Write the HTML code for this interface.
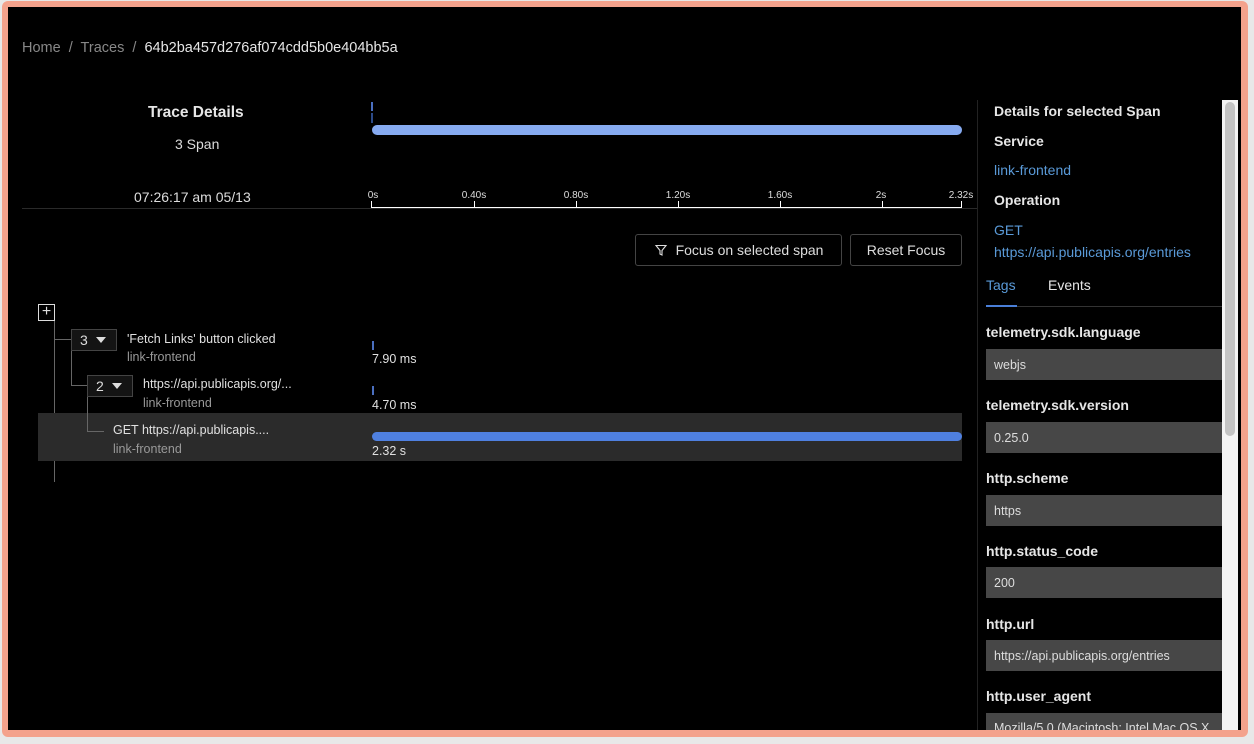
<!DOCTYPE html>
<html><head><meta charset="utf-8"><style>
*{margin:0;padding:0;box-sizing:border-box}
body{width:1254px;height:744px;background:#e8e8e8;font-family:"Liberation Sans",sans-serif;position:relative;overflow:hidden;color:#ddd}
.frame{position:absolute;left:2px;top:1px;width:1246px;height:736px;background:#f4a28c;border-radius:6px}
.inner{position:absolute;left:8px;top:7px;width:1233px;height:723px;background:#000;overflow:hidden}
.a{position:absolute;white-space:nowrap}
.bc{font-size:14.5px;color:#888}
.w{color:#e6e6e6}
.tick{position:absolute;top:201px;width:1px;height:6px;background:#fff}
.tl{position:absolute;top:190px;font-size:10px;color:#ddd;transform:translateX(-50%)}
.btn{position:absolute;border:1px solid #444;border-radius:3px;font-size:14px;color:#ddd;display:flex;align-items:center;justify-content:center;height:32px;top:234px}
.num{position:absolute;border:1px solid #444;background:#141414;font-size:14px;color:#ddd;width:46px;height:22px;display:flex;align-items:center;padding-left:8px}
.tri{display:inline-block;width:0;height:0;border-left:5px solid transparent;border-right:5px solid transparent;border-top:6px solid #ddd;margin-left:8px}
.ln{position:absolute;background:#666}
.nm{font-size:12.5px;color:#e0e0e0}
.sv{font-size:12.5px;color:#999}
.k{position:absolute;left:986px;font-size:14px;font-weight:bold;color:#e6e6e6}
.v{position:absolute;left:986px;width:236px;height:31px;background:#474747;font-size:12.5px;color:#ddd;padding-left:8px;display:flex;align-items:center}
</style></head><body>
<div class="frame"></div>
<div class="inner"></div>
<div class="a bc" style="left:22px;top:40px">Home &nbsp;/&nbsp; Traces &nbsp;/&nbsp; <span class="w">64b2ba457d276af074cdd5b0e404bb5a</span></div>
<div class="a" style="left:148px;top:104px;font-size:15.5px;font-weight:bold;color:#e6e6e6">Trace Details</div>
<div class="a" style="left:175px;top:136px;font-size:14px;color:#ddd">3 Span</div>
<div class="a" style="left:134px;top:189px;font-size:14px;color:#ddd">07:26:17 am 05/13</div>
<div class="a" style="left:22px;top:208px;width:955px;height:1px;background:#2a2a2a"></div>
<div class="a" style="left:371px;top:102px;width:2px;height:9px;background:#4a6fc0"></div>
<div class="a" style="left:371px;top:113px;width:2px;height:10px;background:#2c4a88"></div>
<div class="a" style="left:372px;top:125px;width:590px;height:10px;border-radius:5px;background:#86aaf0"></div>
<div class="a" style="left:371px;top:207px;width:591px;height:1px;background:#fff"></div>
<div class="tick" style="left:371px"></div><div class="tick" style="left:474px"></div><div class="tick" style="left:576px"></div><div class="tick" style="left:678px"></div><div class="tick" style="left:780px"></div><div class="tick" style="left:882px"></div><div class="tick" style="left:961px"></div>
<div class="tl" style="left:373px">0s</div><div class="tl" style="left:474px">0.40s</div><div class="tl" style="left:576px">0.80s</div><div class="tl" style="left:678px">1.20s</div><div class="tl" style="left:780px">1.60s</div><div class="tl" style="left:881px">2s</div><div class="tl" style="left:961px">2.32s</div>
<div class="btn" style="left:635px;width:207px"><svg width="14" height="14" viewBox="0 0 14 14" style="margin-right:8px"><path d="M2 2.5h10L8 7.5v4.5l-2-1V7.5z" fill="none" stroke="#ddd" stroke-width="1.1"/></svg>Focus on selected span</div>
<div class="btn" style="left:850px;width:112px">Reset Focus</div>
<div class="a" style="left:38px;top:304px;width:17px;height:17px;border:1.5px solid #ddd;color:#ddd;font-size:16px;line-height:13px;text-align:center">+</div>
<div class="ln" style="left:54px;top:321px;width:1px;height:161px"></div>
<div class="ln" style="left:54px;top:339px;width:18px;height:1px"></div>
<div class="num" style="left:71px;top:329px">3<span class="tri"></span></div>
<div class="a nm" style="left:127px;top:332px">'Fetch Links' button clicked</div>
<div class="a sv" style="left:127px;top:350px">link-frontend</div>
<div class="ln" style="left:71px;top:351px;width:1px;height:34px"></div>
<div class="ln" style="left:71px;top:385px;width:17px;height:1px"></div>
<div class="num" style="left:87px;top:375px">2<span class="tri"></span></div>
<div class="a nm" style="left:143px;top:377px">https://api.publicapis.org/...</div>
<div class="a sv" style="left:143px;top:396px">link-frontend</div>
<div class="a" style="left:38px;top:413px;width:924px;height:48px;background:#2b2b2b"></div>
<div class="ln" style="left:87px;top:397px;width:1px;height:34px"></div>
<div class="ln" style="left:87px;top:431px;width:17px;height:1px"></div>
<div class="a nm" style="left:113px;top:423px">GET https://api.publicapis....</div>
<div class="a sv" style="left:113px;top:442px">link-frontend</div>
<div class="a" style="left:372px;top:341px;width:2px;height:9px;background:#4a6fc0"></div>
<div class="a nm" style="left:372px;top:352px">7.90 ms</div>
<div class="a" style="left:372px;top:386px;width:2px;height:9px;background:#4a6fc0"></div>
<div class="a nm" style="left:372px;top:398px">4.70 ms</div>
<div class="a" style="left:372px;top:432px;width:590px;height:9px;border-radius:5px;background:#4f80e0"></div>
<div class="a nm" style="left:372px;top:444px">2.32 s</div>
<div class="a" style="left:977px;top:100px;width:1px;height:630px;background:#222"></div>
<div class="a" style="left:994px;top:103px;font-size:14px;font-weight:bold;color:#e6e6e6">Details for selected Span</div>
<div class="a" style="left:994px;top:133px;font-size:14px;font-weight:bold;color:#e6e6e6">Service</div>
<div class="a" style="left:994px;top:162px;font-size:14px;color:#5a9ad8">link-frontend</div>
<div class="a" style="left:994px;top:192px;font-size:14px;font-weight:bold;color:#e6e6e6">Operation</div>
<div class="a" style="left:994px;top:219px;font-size:14px;color:#5a9ad8;line-height:22px">GET<br>https://api.publicapis.org/entries</div>
<div class="a" style="left:986px;top:277px;font-size:14px;color:#5a9ad8">Tags</div>
<div class="a" style="left:1048px;top:277px;font-size:14px;color:#e6e6e6">Events</div>
<div class="a" style="left:986px;top:306px;width:236px;height:1px;background:#333"></div>
<div class="a" style="left:986px;top:305px;width:31px;height:2px;background:#4a7fd8"></div>
<div class="k" style="top:324px">telemetry.sdk.language</div><div class="v" style="top:349px">webjs</div>
<div class="k" style="top:397px">telemetry.sdk.version</div><div class="v" style="top:422px">0.25.0</div>
<div class="k" style="top:470px">http.scheme</div><div class="v" style="top:495px">https</div>
<div class="k" style="top:543px">http.status_code</div><div class="v" style="top:567px">200</div>
<div class="k" style="top:616px">http.url</div><div class="v" style="top:640px">https://api.publicapis.org/entries</div>
<div class="k" style="top:688px">http.user_agent</div><div class="v" style="top:713px;height:17px;overflow:hidden;align-items:flex-start;padding-top:8px">Mozilla/5.0 (Macintosh; Intel Mac OS X</div>
<div class="a" style="left:1222px;top:100px;width:16px;height:630px;background:#f4f4f4"></div>
<div class="a" style="left:1225px;top:102px;width:10px;height:334px;border-radius:5px;background:#c4c4c4"></div>
</body></html>
